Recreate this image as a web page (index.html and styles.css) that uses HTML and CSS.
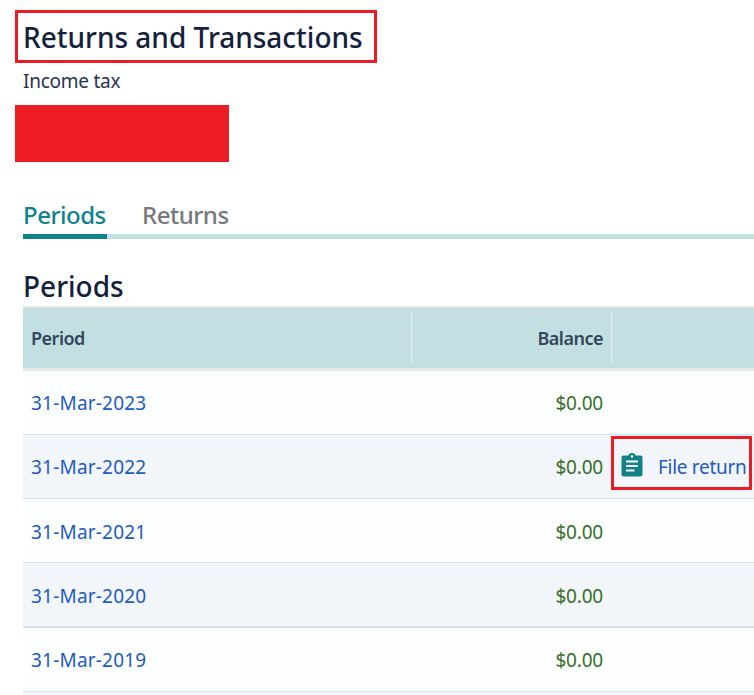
FILE: index.html
```
<!DOCTYPE html>
<html lang="en"><head><meta charset="utf-8"><title>Returns and Transactions</title><link rel="stylesheet" href="styles.css"></head>
<body>
<header>
<h1>Returns and Transactions</h1>
<p class="sub">Income tax</p>
<div class="redacted"></div>
</header>
<nav class="tabs"><a class="tab active">Periods</a><a class="tab">Returns</a></nav>
<main>
<h2>Periods</h2>
<div class="table">
<div class="row head"><div class="c1">Period</div><div class="c2">Balance</div><div class="c3"></div></div>
<div class="row"><div class="c1">31-Mar-2023</div><div class="c2">$0.00</div><div class="c3"></div></div>
<div class="row alt"><div class="c1">31-Mar-2022</div><div class="c2">$0.00</div><div class="c3"><a class="file"><svg width="22" height="24" viewBox="0 0 22 24"><path fill="#0f828c" d="M2.500 2.500H7.400a3.800 3.800 0 0 1 7.200 0H19.500a2 2 0 0 1 2 2V21.500a2 2 0 0 1-2 2H2.500a2 2 0 0 1-2-2V4.500a2 2 0 0 1 2-2Z"/><circle cx="11" cy="3.500" r="1.200" fill="#fff"/><path d="M5 8.500h12M5 13h12M5 17.500h8.500" stroke="#fff" stroke-width="2.200"/></svg><span>File return</span></a></div></div>
<div class="row low"><div class="c1">31-Mar-2021</div><div class="c2">$0.00</div><div class="c3"></div></div>
<div class="row alt thick low"><div class="c1">31-Mar-2020</div><div class="c2">$0.00</div><div class="c3"></div></div>
<div class="row"><div class="c1">31-Mar-2019</div><div class="c2">$0.00</div><div class="c3"></div></div>
<div class="row alt last"></div>
</div>
</main>
</body></html>
```
FILE: styles.css
```
*{box-sizing:border-box}
html,body{margin:0;height:695px;overflow:hidden}
body{width:754px;background:#fff;font-family:"Noto Sans","Open Sans",sans-serif;font-size:19px;font-weight:400;color:#14213d}
header{padding:10px 0 0 15px}
h1{margin:0;width:362px;height:53px;border:3px solid #ed1c24;padding-left:5px;font-size:28px;font-weight:500;line-height:48px;white-space:nowrap}
.sub{margin:0;padding-left:8px;height:42px;line-height:36px;letter-spacing:-.25px;color:#27334d}
.redacted{width:214px;height:57px;background:#ed1c24}
.tabs{display:flex;gap:35px;margin:36px 0 0 23px;height:41px;border-bottom:5px solid #c3dfe2;font-size:24px;font-weight:500;line-height:34px;letter-spacing:-.5px}
.tab{height:41px;color:#77787b}
.active{width:84px;color:#0f828c;border-bottom:5px solid #0f828c}
main{margin-left:23px}
h2{margin:0;height:67px;padding-top:27px;font-size:28px;font-weight:500;line-height:40px}
.table{border-top:2px solid #e7e8e9}
.row{display:grid;grid-template-columns:389px 200px 1fr;height:64px;align-items:center;border-bottom:1px solid #d5e0f0;background:#fdfeff;color:#1f5bc0;line-height:26px}
.alt{background:#f2f5fa}
.thick{height:65px;border-bottom-width:2px}
.low{padding-top:2px}
.last{height:3px;border:0;padding:0}
.c1{padding-left:8px;letter-spacing:.2px}
.c2{text-align:right;padding-right:9px;color:#35711f;letter-spacing:-.2px}
.head{background:#c3dfe2;height:63px;border-bottom:3px solid #e7e8e9}
.head .c1,.head .c2{height:52px;line-height:52px;border-right:1px solid #e2eff0;padding-right:8px;color:#34465d;font-size:18px;font-weight:600;letter-spacing:-.5px}
.file{display:flex;align-items:center;width:141px;height:54px;margin:-3px 0 4px -1px;border:3px solid #ed1c24;padding-left:7px;gap:15px;white-space:nowrap;letter-spacing:-.3px}
.file svg{flex:none;margin-top:4px}
.file span{padding-top:7px}
```
